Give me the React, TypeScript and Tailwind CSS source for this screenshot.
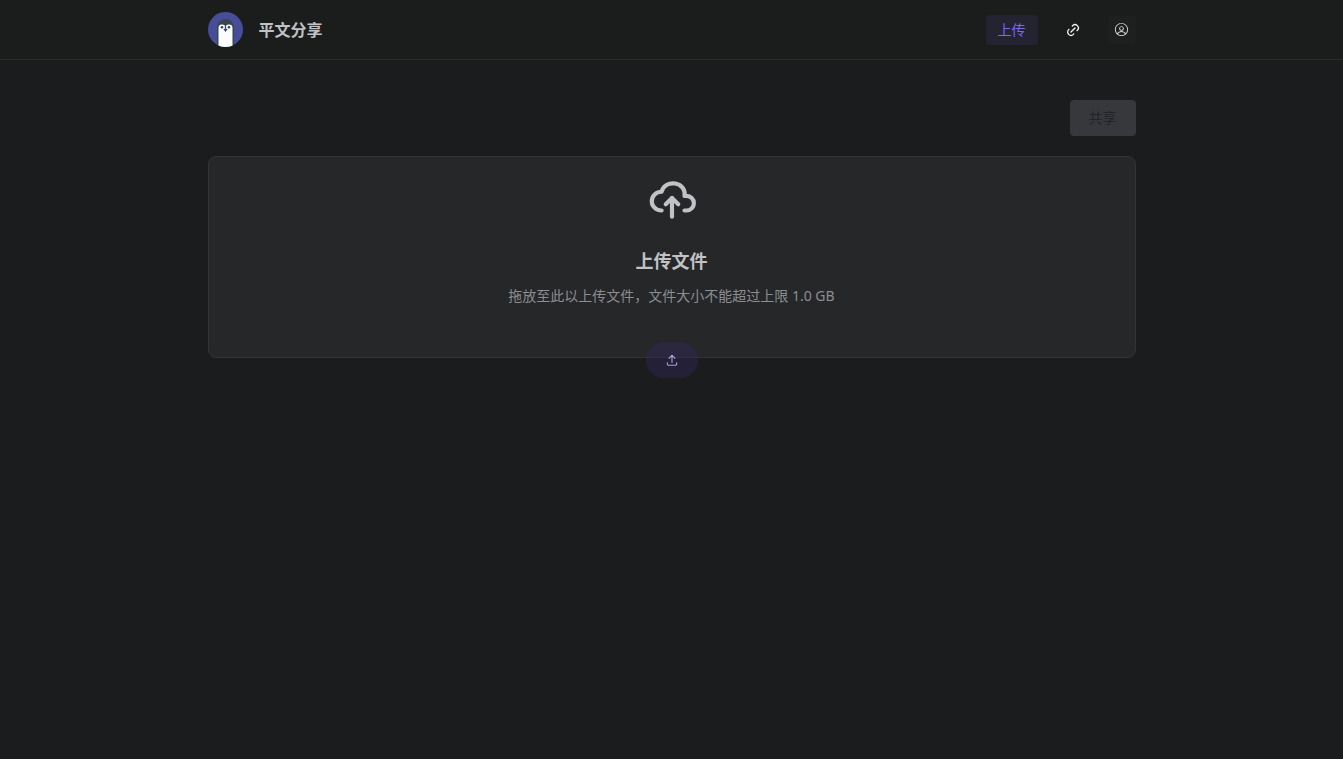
import React from "react";

// Icons
import { RxAvatar } from "react-icons/rx";
import { TbCloudUpload, TbLink, TbUpload } from "react-icons/tb";

function Logo() {
  return (
    <svg viewBox="0 0 35 35" className="size-[35px] shrink-0" aria-hidden="true">
      <clipPath id="logo-circle">
        <circle cx="17.5" cy="17.5" r="17.5" />
      </clipPath>
      <g clipPath="url(#logo-circle)">
        <rect width="35" height="35" fill="#484d99" />
        <path d="M9 35V15.5a8.5 8.5 0 0 1 17 0v19.5z" fill="#37474f" />
        <path
          d="M10.5 35V16.2a3.5 3.6 0 0 1 7 -0.4a3.5 3.6 0 0 1 7 0.4v18.8z"
          fill="#fafcfd"
        />
        <circle cx="14" cy="15.2" r="1.3" fill="#37474f" />
        <circle cx="21" cy="15.2" r="1.3" fill="#37474f" />
        <path d="M15.4 17h4.2l-2.1 3z" fill="#353a78" />
        <path d="M16.8 14.5h1.4v3h-1.4z" fill="#37474f" />
      </g>
    </svg>
  );
}

function Header() {
  return (
    <header className="h-[60px] border-b border-[#2a2b2d] bg-[#1b1d1c]">
      <div className="mx-auto flex h-full max-w-[960px] items-center justify-between px-4">
        <a href="/" className="flex items-center gap-4">
          <Logo />
          <span className="text-base leading-6 font-semibold">平文分享</span>
        </a>
        <nav className="flex items-center gap-5">
          <a
            href="/upload"
            className="rounded-sm bg-[#242331] px-3 py-[5px] text-sm leading-5 text-[#7b67f0]"
          >
            上传
          </a>
          <button
            type="button"
            aria-label="分享链接"
            className="flex h-7 w-[30px] items-center justify-center text-[#f1f3f5]"
          >
            <TbLink size={16} />
          </button>
          <button
            type="button"
            aria-label="账户"
            className="flex size-7 items-center justify-center rounded-sm bg-[#1e201f] text-[#d5d7d8]"
          >
            <RxAvatar size={15} />
          </button>
        </nav>
      </div>
    </header>
  );
}

function Dropzone() {
  const inputRef = React.useRef<HTMLInputElement>(null);
  const openPicker = () => inputRef.current?.click();

  return (
    <section className="relative mt-5 flex flex-col items-center rounded-lg border border-[#323437] bg-[#262729] px-4 pt-4 pb-[49px] text-center">
      <input
        ref={inputRef}
        type="file"
        multiple
        aria-label="上传文件"
        className="hidden"
      />
      <TbCloudUpload size={50} className="text-[#c1c2c5]" />
      <h2 className="mt-6 text-lg leading-7 font-bold">上传文件</h2>
      <p className="mt-[9px] text-sm leading-6 text-[#8b8d91]">
        拖放至此以上传文件，文件大小不能超过上限 1.0 GB
      </p>
      <button
        type="button"
        aria-label="选择文件"
        onClick={openPicker}
        className="absolute -bottom-[21px] left-1/2 flex h-9 w-[52px] -translate-x-1/2 items-center justify-center rounded-full bg-[#33295f]/40 text-[#a9a1dc]"
      >
        <TbUpload size={14} />
      </button>
    </section>
  );
}

export default function App() {
  return (
    <div className="min-h-screen bg-[#1b1c1d] font-['Noto_Sans','Noto_Sans_CJK_SC',sans-serif] text-[#c1c2c5]">
      <Header />
      <main className="mx-auto max-w-[960px] px-4 pt-10">
        <div className="flex justify-end">
          <button
            type="button"
            disabled
            className="h-9 rounded-sm bg-[#37383c] px-[19px] text-sm text-[#222428]"
          >
            共享
          </button>
        </div>
        <Dropzone />
      </main>
    </div>
  );
}
